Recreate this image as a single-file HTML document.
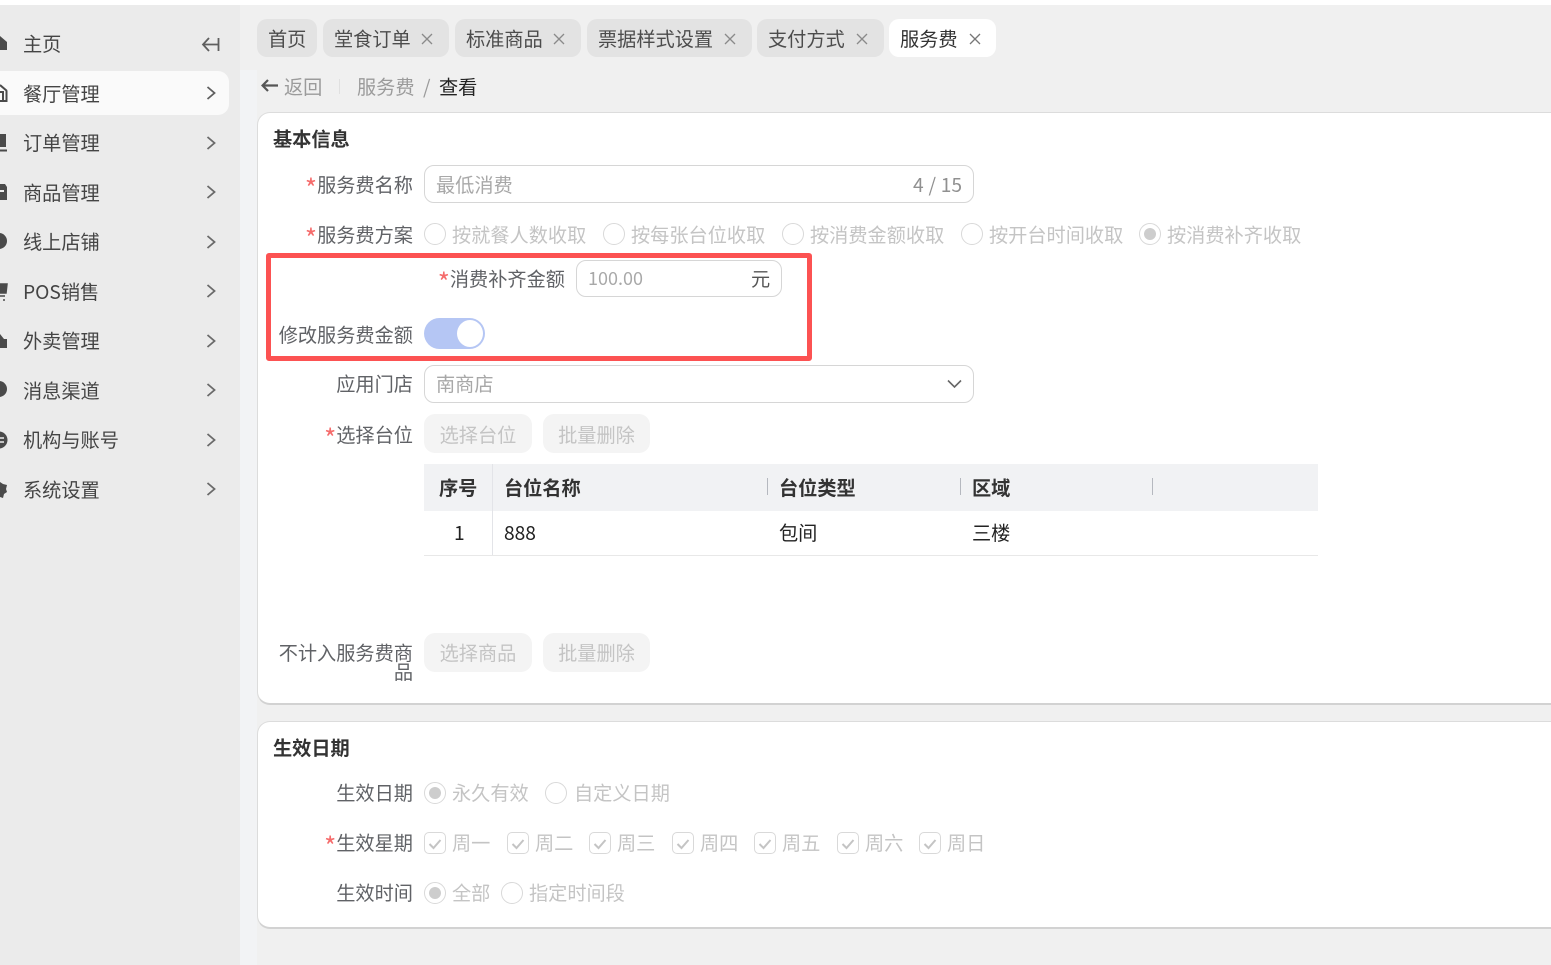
<!DOCTYPE html>
<html lang="zh-CN"><head><meta charset="utf-8"><title>服务费</title>
<style>
*{box-sizing:border-box}
html,body{margin:0;padding:0;width:1551px;height:965px;overflow:hidden;background:#fff}
body{position:relative;font-family:"Noto Sans CJK SC","Liberation Sans",sans-serif;font-size:19.2px;color:#5e5e5e}
div,svg{position:absolute}
.t{white-space:nowrap;line-height:30px;height:30px;transform:translateY(-1px)}
.m{left:23px;color:#444}
.l{text-align:right;right:1138px;color:#606266}
.s{color:#f56c6c;position:relative;top:6px;font-size:26px;line-height:0}
.g{color:#c4c4c4}
.tab{top:19px;height:38px;border-radius:10px;background:#e3e3e3;line-height:39px;padding-left:11px;color:#4c4c4c;white-space:nowrap}
.box{border:1px solid #d6d6d6;border-radius:10px;background:#fff}
.r{width:22px;height:22px;border:1px solid #d9d9d9;border-radius:50%;background:#fff}
.r.on:after{content:"";position:absolute;left:4px;top:4px;width:12px;height:12px;background:#cdcdcd;border-radius:50%}
.c{width:22px;height:22px;border:1px solid #d9d9d9;border-radius:5px;background:#fff}
.btn{height:39px;border-radius:11px;background:#f4f4f4;color:#c4c4c4;line-height:40px;text-align:center}
.card{left:257px;width:1320px;background:#fff;border:1px solid #dcdcdc;border-bottom:2px solid #d2d2d2;border-radius:13px}
.h{font-weight:bold;color:#333}
.bd{color:#222}
</style></head><body>
<div style="left:0;top:5px;width:240px;height:960px;background:#ebebeb"></div>
<div style="left:240px;top:5px;width:1311px;height:960px;background:#f0f0f0"></div>
<div style="left:240px;top:70px;width:17px;height:895px;background:#f2f3f5"></div>

<div style="left:-10px;top:71px;width:239px;height:44px;background:#fafafa;border-radius:11px"></div>

<!-- sidebar icons -->
<svg style="left:0;top:34px" width="8" height="18" viewBox="0 0 8 18"><path d="M-8 9L0 2l7 6v8H-8z" fill="#4a4a4a"/></svg>
<svg style="left:0;top:83px" width="9" height="20" viewBox="0 0 9 20"><path d="M0 2l7 6M6.500 8v10H0M0 9h3v9" fill="none" stroke="#4a4a4a" stroke-width="2"/></svg>
<svg style="left:0;top:133px" width="8" height="20" viewBox="0 0 8 20"><path d="M0 2h5v11H0zM0 17.500h7" fill="#4a4a4a" stroke="#4a4a4a" stroke-width="2"/></svg>
<svg style="left:0;top:183px" width="8" height="18" viewBox="0 0 8 18"><path d="M0 1h5l2 3v13H0z" fill="#4a4a4a"/><path d="M0 8h4" stroke="#ebebeb" stroke-width="2"/></svg>
<svg style="left:0;top:232px" width="8" height="18" viewBox="0 0 8 18"><circle cx="-1" cy="9" r="8" fill="#4a4a4a"/></svg>
<svg style="left:0;top:282px" width="8" height="20" viewBox="0 0 8 20"><path d="M0 2h7l-1 9H0zM0 14h5M3 18h2" stroke="#4a4a4a" stroke-width="1.500" fill="#4a4a4a"/></svg>
<svg style="left:0;top:332px" width="8" height="18" viewBox="0 0 8 18"><path d="M0 2l4 5h3v9H0z" fill="#4a4a4a"/></svg>
<svg style="left:0;top:381px" width="8" height="18" viewBox="0 0 8 18"><circle cx="-1" cy="8" r="8" fill="#4a4a4a"/></svg>
<svg style="left:0;top:431px" width="8" height="18" viewBox="0 0 8 18"><circle cx="-1" cy="9" r="8.500" fill="#4a4a4a"/><path d="M0 7h4M0 11h4" stroke="#ebebeb" stroke-width="1.500"/></svg>
<svg style="left:0;top:480px" width="8" height="20" viewBox="0 0 8 20"><path d="M0 2l3 2 4 1-1 4 1 3-3 2-1 4-3-1z" fill="#4a4a4a"/></svg>

<div class="t m" style="top:29px">主页</div>
<div class="t m" style="top:79px">餐厅管理</div>
<div class="t m" style="top:128px">订单管理</div>
<div class="t m" style="top:178px">商品管理</div>
<div class="t m" style="top:227px">线上店铺</div>
<div class="t m" style="top:277px">POS销售</div>
<div class="t m" style="top:326px">外卖管理</div>
<div class="t m" style="top:376px">消息渠道</div>
<div class="t m" style="top:425px">机构与账号</div>
<div class="t m" style="top:475px">系统设置</div>

<svg style="left:201px;top:36px" width="19" height="17" viewBox="0 0 19 17"><path d="M8 2L2 8.500l6 6.500M2 8.500h15M17.500 2v13" fill="none" stroke="#5f5f5f" stroke-width="1.800"/></svg>
<svg style="left:205px;top:84px" width="12" height="18" viewBox="0 0 12 18"><path d="M2.500 3l7 6-7 6" fill="none" stroke="#5f5f5f" stroke-width="1.800"/></svg>
<svg style="left:205px;top:134px" width="12" height="18" viewBox="0 0 12 18"><path d="M2.500 3l7 6-7 6" fill="none" stroke="#6a6a6a" stroke-width="1.800"/></svg>
<svg style="left:205px;top:183px" width="12" height="18" viewBox="0 0 12 18"><path d="M2.500 3l7 6-7 6" fill="none" stroke="#6a6a6a" stroke-width="1.800"/></svg>
<svg style="left:205px;top:233px" width="12" height="18" viewBox="0 0 12 18"><path d="M2.500 3l7 6-7 6" fill="none" stroke="#6a6a6a" stroke-width="1.800"/></svg>
<svg style="left:205px;top:282px" width="12" height="18" viewBox="0 0 12 18"><path d="M2.500 3l7 6-7 6" fill="none" stroke="#6a6a6a" stroke-width="1.800"/></svg>
<svg style="left:205px;top:332px" width="12" height="18" viewBox="0 0 12 18"><path d="M2.500 3l7 6-7 6" fill="none" stroke="#6a6a6a" stroke-width="1.800"/></svg>
<svg style="left:205px;top:381px" width="12" height="18" viewBox="0 0 12 18"><path d="M2.500 3l7 6-7 6" fill="none" stroke="#6a6a6a" stroke-width="1.800"/></svg>
<svg style="left:205px;top:431px" width="12" height="18" viewBox="0 0 12 18"><path d="M2.500 3l7 6-7 6" fill="none" stroke="#6a6a6a" stroke-width="1.800"/></svg>
<svg style="left:205px;top:480px" width="12" height="18" viewBox="0 0 12 18"><path d="M2.500 3l7 6-7 6" fill="none" stroke="#6a6a6a" stroke-width="1.800"/></svg>

<!-- tabs -->
<div class="tab" style="left:257px;width:60px">首页</div>
<div class="tab" style="left:323px;width:126px">堂食订单<svg style="left:98px;top:14px" width="12" height="12" viewBox="0 0 12 12"><path d="M1 1l10 10M11 1L1 11" stroke="#8a8a8a" stroke-width="1.300"/></svg></div>
<div class="tab" style="left:455px;width:126px">标准商品<svg style="left:98px;top:14px" width="12" height="12" viewBox="0 0 12 12"><path d="M1 1l10 10M11 1L1 11" stroke="#8a8a8a" stroke-width="1.300"/></svg></div>
<div class="tab" style="left:587px;width:165px">票据样式设置<svg style="left:137px;top:14px" width="12" height="12" viewBox="0 0 12 12"><path d="M1 1l10 10M11 1L1 11" stroke="#8a8a8a" stroke-width="1.300"/></svg></div>
<div class="tab" style="left:757px;width:127px">支付方式<svg style="left:99px;top:14px" width="12" height="12" viewBox="0 0 12 12"><path d="M1 1l10 10M11 1L1 11" stroke="#8a8a8a" stroke-width="1.300"/></svg></div>
<div class="tab" style="left:889px;width:107px;background:#fff;color:#333">服务费<svg style="left:80px;top:14px" width="12" height="12" viewBox="0 0 12 12"><path d="M1 1l10 10M11 1L1 11" stroke="#777" stroke-width="1.300"/></svg></div>

<!-- breadcrumb -->
<svg style="left:261px;top:78px" width="18" height="15" viewBox="0 0 18 15"><path d="M7 2L1.500 7.500 7 13M1.500 7.500H17" fill="none" stroke="#555" stroke-width="2.200"/></svg>
<div class="t" style="left:284px;top:72px;color:#9b9b9b">返回</div>
<div style="left:339px;top:79px;width:1px;height:15px;background:#e0e0e0"></div>
<div class="t" style="left:357px;top:72px;color:#9b9b9b">服务费</div>
<div class="t" style="left:423px;top:72px;color:#9b9b9b">/</div>
<div class="t" style="left:439px;top:72px;color:#222">查看</div>

<!-- cards -->
<div class="card" style="top:112px;height:593px"></div>
<div class="card" style="top:721px;height:208px"></div>

<div class="t h" style="left:273px;top:124px">基本信息</div>

<div class="t l" style="top:170px"><span class="s">*</span>服务费名称</div>
<div class="box" style="left:424px;top:165px;width:550px;height:38px"></div>
<div class="t" style="left:436px;top:170px;color:#a8a8a8">最低消费</div>
<div class="t" style="left:913px;top:170px;color:#909090;word-spacing:.5px">4 / 15</div>

<div class="t l" style="top:220px"><span class="s">*</span>服务费方案</div>
<div class="r" style="left:424px;top:223px"></div><div class="t g" style="left:452px;top:220px">按就餐人数收取</div>
<div class="r" style="left:603px;top:223px"></div><div class="t g" style="left:631px;top:220px">按每张台位收取</div>
<div class="r" style="left:782px;top:223px"></div><div class="t g" style="left:810px;top:220px">按消费金额收取</div>
<div class="r" style="left:961px;top:223px"></div><div class="t g" style="left:989px;top:220px">按开台时间收取</div>
<div class="r on" style="left:1139px;top:223px"></div><div class="t g" style="left:1167px;top:220px">按消费补齐收取</div>

<div class="t" style="right:986px;top:264px;color:#606266"><span class="s">*</span>消费补齐金额</div>
<div class="box" style="left:576px;top:260px;width:206px;height:37px"></div>
<div class="t" style="left:588px;top:264px;color:#a8a8a8;font-size:18px">100.00</div>
<div class="t" style="left:751px;top:264px;color:#555">元</div>

<div class="t l" style="top:319px;transform:none">修改服务费金额</div>
<div style="left:424px;top:318px;width:61px;height:31px;background:#b5c6f4;border-radius:16px"></div>
<div style="left:457px;top:320px;width:26px;height:27px;background:#fff;border-radius:50%"></div>

<div style="left:266px;top:253px;width:546px;height:108px;border:5px solid #fc5252;border-radius:3px"></div>

<div class="t l" style="top:369px">应用门店</div>
<div class="box" style="left:424px;top:365px;width:550px;height:38px"></div>
<div class="t" style="left:436px;top:369px;color:#a8a8a8">南商店</div>
<svg style="left:947px;top:379px" width="15" height="10" viewBox="0 0 15 10"><path d="M1 1.500l6.500 6.500L14 1.500" fill="none" stroke="#666" stroke-width="1.600"/></svg>

<div class="t l" style="top:420px"><span class="s">*</span>选择台位</div>
<div class="btn" style="left:424px;top:414px;width:108px">选择台位</div>
<div class="btn" style="left:543px;top:414px;width:107px">批量删除</div>

<!-- table -->
<div style="left:424px;top:464px;width:894px;height:47px;background:#f1f2f4"></div>
<div style="left:492px;top:464px;width:1px;height:91px;background:#e3e4e8"></div>
<div style="left:424px;top:555px;width:894px;height:1px;background:#e8e8e8"></div>
<div style="left:767px;top:478px;width:1px;height:17px;background:#b5b8bf"></div>
<div style="left:960px;top:478px;width:1px;height:17px;background:#b5b8bf"></div>
<div style="left:1152px;top:478px;width:1px;height:17px;background:#b5b8bf"></div>
<div class="t h" style="left:439px;top:473px">序号</div>
<div class="t h" style="left:504px;top:473px">台位名称</div>
<div class="t h" style="left:779px;top:473px">台位类型</div>
<div class="t h" style="left:972px;top:473px">区域</div>
<div class="t bd" style="left:454px;top:518px">1</div>
<div class="t bd" style="left:504px;top:518px">888</div>
<div class="t bd" style="left:779px;top:518px">包间</div>
<div class="t bd" style="left:972px;top:518px">三楼</div>

<div class="t l" style="top:638px">不计入服务费商</div>
<div class="t l" style="top:657px">品</div>
<div class="btn" style="left:424px;top:633px;width:108px;line-height:39px">选择商品</div>
<div class="btn" style="left:543px;top:633px;width:107px;line-height:39px">批量删除</div>

<div class="t h" style="left:273px;top:733px">生效日期</div>

<div class="t l" style="top:778px">生效日期</div>
<div class="r on" style="left:424px;top:782px"></div><div class="t g" style="left:452px;top:778px">永久有效</div>
<div class="r" style="left:545px;top:782px"></div><div class="t g" style="left:574px;top:778px">自定义日期</div>

<div class="t l" style="top:828px"><span class="s">*</span>生效星期</div>
<div class="c" style="left:424px;top:832px"></div><svg style="left:428px;top:838px" width="14" height="12" viewBox="0 0 14 12"><path d="M1.500 6l4 4 7-8" fill="none" stroke="#c4c4c4" stroke-width="2"/></svg><div class="t g" style="left:452px;top:828px">周一</div>
<div class="c" style="left:507px;top:832px"></div><svg style="left:511px;top:838px" width="14" height="12" viewBox="0 0 14 12"><path d="M1.500 6l4 4 7-8" fill="none" stroke="#c4c4c4" stroke-width="2"/></svg><div class="t g" style="left:535px;top:828px">周二</div>
<div class="c" style="left:589px;top:832px"></div><svg style="left:593px;top:838px" width="14" height="12" viewBox="0 0 14 12"><path d="M1.500 6l4 4 7-8" fill="none" stroke="#c4c4c4" stroke-width="2"/></svg><div class="t g" style="left:617px;top:828px">周三</div>
<div class="c" style="left:672px;top:832px"></div><svg style="left:676px;top:838px" width="14" height="12" viewBox="0 0 14 12"><path d="M1.500 6l4 4 7-8" fill="none" stroke="#c4c4c4" stroke-width="2"/></svg><div class="t g" style="left:700px;top:828px">周四</div>
<div class="c" style="left:754px;top:832px"></div><svg style="left:758px;top:838px" width="14" height="12" viewBox="0 0 14 12"><path d="M1.500 6l4 4 7-8" fill="none" stroke="#c4c4c4" stroke-width="2"/></svg><div class="t g" style="left:782px;top:828px">周五</div>
<div class="c" style="left:837px;top:832px"></div><svg style="left:841px;top:838px" width="14" height="12" viewBox="0 0 14 12"><path d="M1.500 6l4 4 7-8" fill="none" stroke="#c4c4c4" stroke-width="2"/></svg><div class="t g" style="left:865px;top:828px">周六</div>
<div class="c" style="left:919px;top:832px"></div><svg style="left:923px;top:838px" width="14" height="12" viewBox="0 0 14 12"><path d="M1.500 6l4 4 7-8" fill="none" stroke="#c4c4c4" stroke-width="2"/></svg><div class="t g" style="left:947px;top:828px">周日</div>

<div class="t l" style="top:878px">生效时间</div>
<div class="r on" style="left:424px;top:882px"></div><div class="t g" style="left:452px;top:878px">全部</div>
<div class="r" style="left:501px;top:882px"></div><div class="t g" style="left:529px;top:878px">指定时间段</div>
</body></html>
